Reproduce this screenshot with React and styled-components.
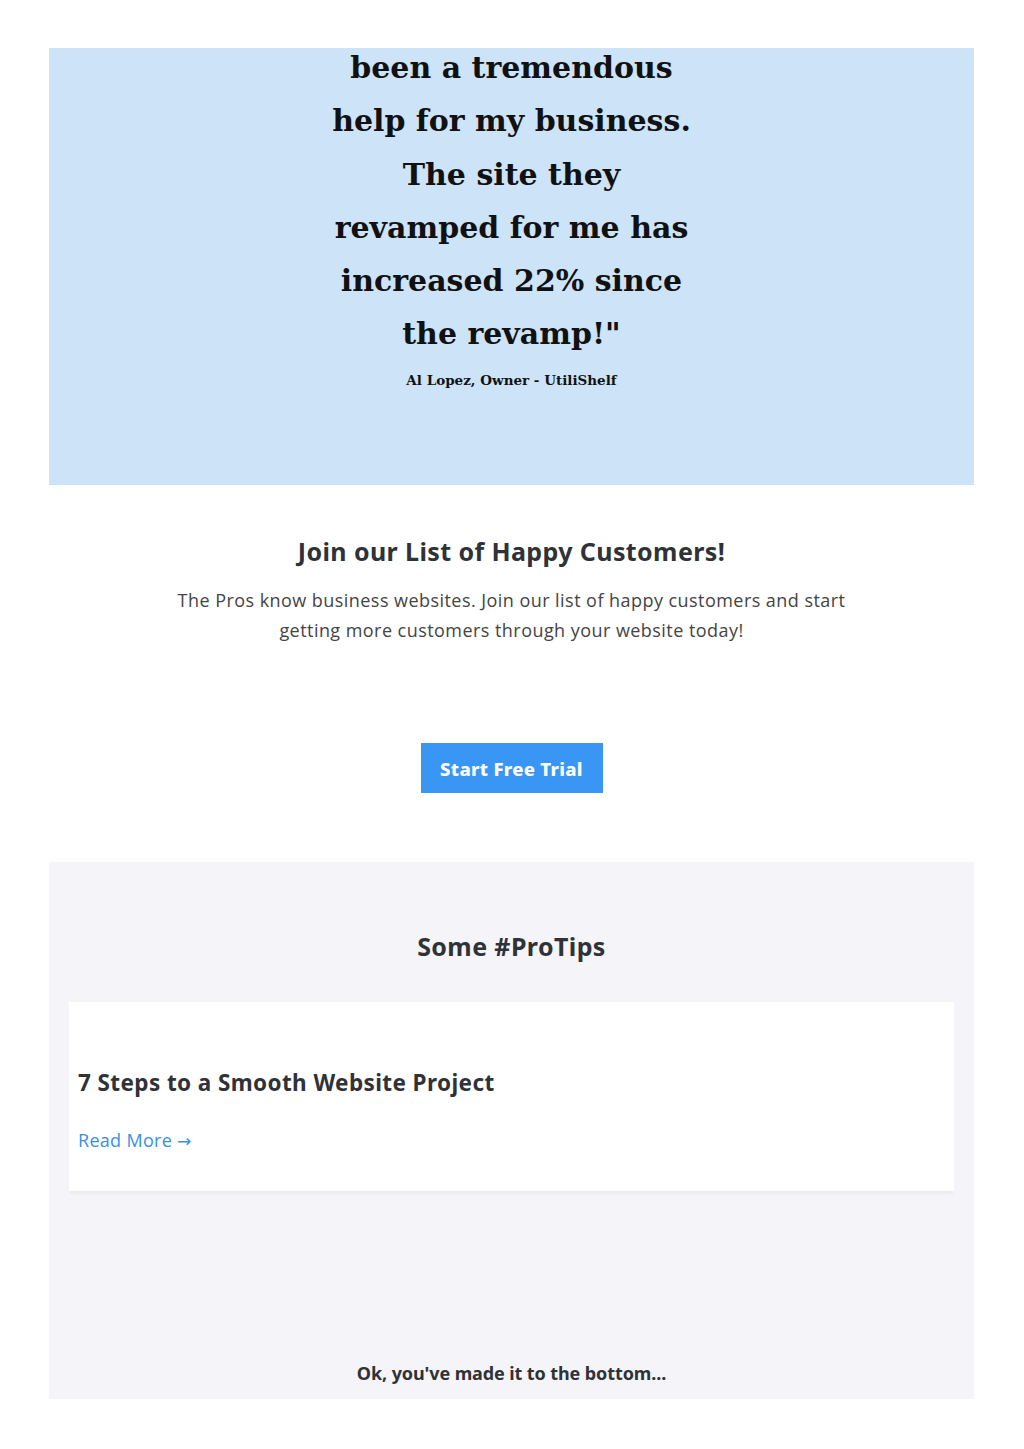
import React from "react";
import styled, { createGlobalStyle } from "styled-components";

const GlobalStyle = createGlobalStyle`
  html, body { margin: 0; padding: 0; background: #ffffff; }
  body { font-family: "Open Sans", "Noto Sans", sans-serif; color: #333; }
`;

const Page = styled.div`
  width: 925px;
  margin: 0 0 0 49px;
  padding: 48px 0 51px;
`;

const QuotePanel = styled.section`
  background: #cce3f8;
  height: 437px;
  overflow: hidden;
  display: flex;
  flex-direction: column;
  align-items: center;
`;

const Quote = styled.blockquote`
  margin: -7px 0 0;
  font-family: "DejaVu Serif", "Liberation Serif", serif;
  font-weight: 700;
  font-size: 30px;
  line-height: 53.3px;
  color: #111;
  text-align: center;
`;

const Author = styled.p`
  margin: 6px 0 0;
  font-family: "DejaVu Serif", "Liberation Serif", serif;
  font-weight: 700;
  font-size: 13.5px;
  line-height: 26px;
  color: #111;
`;

const Cta = styled.section`
  height: 377px;
  padding-top: 49px;
  box-sizing: border-box;
  display: flex;
  flex-direction: column;
  align-items: center;
  text-align: center;
`;

const Heading = styled.h2`
  margin: 0;
  font-family: "Noto Sans", "Open Sans", sans-serif;
  font-weight: 700;
  font-size: 25px;
  line-height: 34px;
  color: #2f3237;
  letter-spacing: 0.4px;
`;

const Lead = styled.p`
  margin: 18px 0 0;
  font-family: "Open Sans", sans-serif;
  font-weight: 400;
  font-size: 18px;
  line-height: 29.5px;
  color: #444;
  letter-spacing: 0.45px;
`;

const TrialButton = styled.a`
  margin-top: 98px;
  width: 182px;
  height: 50px;
  display: flex;
  align-items: center;
  justify-content: center;
  background: #3a96f5;
  color: #fff;
  font-family: "Noto Sans", sans-serif;
  font-weight: 800;
  font-size: 18.5px;
  text-decoration: none;
  letter-spacing: 0.3px;
`;

const Tips = styled.section`
  background: #f5f5f9;
  padding: 67px 20px 13px;
  display: flex;
  flex-direction: column;
  align-items: center;
`;

const Card = styled.article`
  align-self: stretch;
  margin-top: 39px;
  background: #fff;
  padding: 66px 9px 37px;
  box-shadow: 0 4px 2px -1px #ebebf0;
`;

const CardTitle = styled.h3`
  margin: 0;
  font-family: "Noto Sans", sans-serif;
  font-weight: 700;
  font-size: 22.5px;
  line-height: 30px;
  color: #2f3237;
  letter-spacing: 0.4px;
`;

const ReadMore = styled.a`
  display: inline-block;
  margin-top: 29px;
  font-family: "Open Sans", sans-serif;
  font-weight: 400;
  font-size: 18px;
  line-height: 26px;
  color: #3b8fe3;
  text-decoration: none;
  letter-spacing: 0.3px;
`;

const Arrow = styled.span`
  font-family: "DejaVu Sans", sans-serif;
  font-size: 17px;
`;

const Bottom = styled.p`
  margin: 169px 0 0;
  font-family: "Noto Sans", sans-serif;
  font-weight: 700;
  font-size: 18px;
  line-height: 26px;
  color: #2f3237;
  letter-spacing: -0.1px;
`;

const quoteLines = [
  "been a tremendous",
  "help for my business.",
  "The site they",
  "revamped for me has",
  "increased 22% since",
  'the revamp!"',
];

export default function App() {
  return (
    <>
      <GlobalStyle />
      <Page>
        <QuotePanel>
          <Quote>
            {quoteLines.map((line) => (
              <div key={line}>{line}</div>
            ))}
          </Quote>
          <Author>Al Lopez, Owner - UtiliShelf</Author>
        </QuotePanel>

        <Cta>
          <Heading>Join our List of Happy Customers!</Heading>
          <Lead>
            The Pros know business websites. Join our list of happy customers and start
            <br />
            getting more customers through your website today!
          </Lead>
          <TrialButton href="#">Start Free Trial</TrialButton>
        </Cta>

        <Tips>
          <Heading>Some #ProTips</Heading>
          <Card>
            <CardTitle>7 Steps to a Smooth Website Project</CardTitle>
            <ReadMore href="#">
              Read More <Arrow>→</Arrow>
            </ReadMore>
          </Card>
          <Bottom>Ok, you've made it to the bottom...</Bottom>
        </Tips>
      </Page>
    </>
  );
}
